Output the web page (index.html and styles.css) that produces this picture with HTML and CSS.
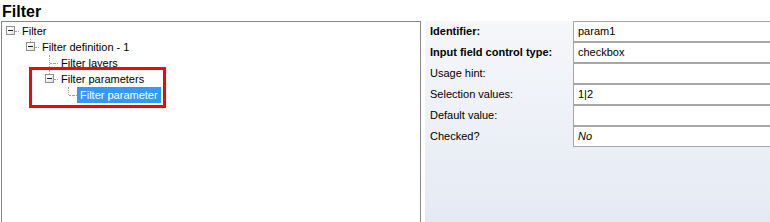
FILE: index.html
```html
<!DOCTYPE html>
<html lang="en">
<head>
    <meta charset="UTF-8">
    <meta name="viewport" content="width=device-width, initial-scale=1.0">
    <title>Filter</title>
    <link rel="stylesheet" href="styles.css">
</head>
<body>
    <h1 class="title">Filter</h1>

    <div class="editor">
        <div class="tree-panel">
            <ul class="tree">
                <li class="node lvl-0">
                    <span class="glyph open"></span><span class="stub"></span><span class="label">Filter</span>
                </li>
                <li class="node lvl-1">
                    <span class="glyph open up"></span><span class="stub"></span><span class="label">Filter definition - 1</span>
                </li>
                <li class="node lvl-2">
                    <span class="glyph leaf through"></span><span class="stub"></span><span class="label">Filter layers</span>
                </li>
                <li class="node lvl-2">
                    <span class="glyph open up"></span><span class="stub"></span><span class="label">Filter parameters</span>
                </li>
                <li class="node lvl-3">
                    <span class="glyph leaf last"></span><span class="stub"></span><span class="label selected">Filter parameter</span>
                </li>
            </ul>
            <div class="callout"></div>
        </div>

        <div class="props">
            <div class="prop">
                <span class="prop-name strong">Identifier:</span>
                <span class="prop-value">param1</span>
            </div>
            <div class="prop">
                <span class="prop-name strong">Input field control type:</span>
                <span class="prop-value">checkbox</span>
            </div>
            <div class="prop">
                <span class="prop-name">Usage hint:</span>
                <span class="prop-value"></span>
            </div>
            <div class="prop">
                <span class="prop-name">Selection values:</span>
                <span class="prop-value">1|2</span>
            </div>
            <div class="prop">
                <span class="prop-name">Default value:</span>
                <span class="prop-value"></span>
            </div>
            <div class="prop">
                <span class="prop-name">Checked?</span>
                <span class="prop-value italic">No</span>
            </div>
        </div>
    </div>
</body>
</html>
```

FILE: styles.css
```css
* {
    margin: 0;
    padding: 0;
    box-sizing: border-box;
}

html, body {
    height: 100%;
}

body {
    background: #ffffff;
    font-family: 'Liberation Sans', Arial, sans-serif;
    font-size: 11px;
    color: #000000;
    overflow: hidden;
    display: flex;
    flex-direction: column;
}

.title {
    height: 21px;
    flex-shrink: 0;
    padding: 1px 0 0 2px;
    font-size: 16px;
    line-height: 21px;
    font-weight: bold;
}

.editor {
    flex: 1;
    display: flex;
    gap: 4px;
    padding-left: 1px;
    min-height: 0;
}

/* Arbol de la izquierda */
.tree-panel {
    position: relative;
    width: 420px;
    border: 1px solid #838790;
    border-bottom: none;
    background: #ffffff;
    padding-top: 1px;
}

.tree {
    list-style: none;
}

.node {
    display: flex;
    align-items: flex-start;
    height: 16px;
}

.lvl-0 { padding-left: 4px; }
.lvl-1 { padding-left: 24px; }
.lvl-2 { padding-left: 43px; }
.lvl-3 { padding-left: 62px; }

.glyph {
    position: relative;
    width: 9px;
    height: 9px;
    margin-top: 3px;
    flex-shrink: 0;
}

.glyph.open {
    border: 1px solid #8f8f8f;
    background: linear-gradient(135deg, #ffffff 30%, #dedede);
}

.glyph.open::after {
    content: '';
    position: absolute;
    left: 1px;
    top: 3px;
    width: 5px;
    height: 1px;
    background: #202020;
}

.glyph.up::before {
    content: '';
    position: absolute;
    left: 3px;
    top: -4px;
    height: 3px;
    border-left: 1px dotted #a0a0a0;
}

.glyph.leaf::before {
    content: '';
    position: absolute;
    left: 4px;
    top: -3px;
    border-left: 1px dotted #a0a0a0;
}

.glyph.through::before {
    height: 16px;
}

.glyph.last::before {
    height: 8px;
}

.glyph.leaf::after {
    content: '';
    position: absolute;
    left: 5px;
    top: 5px;
    width: 4px;
    border-top: 1px dotted #a0a0a0;
}

.stub {
    width: 4px;
    margin-top: 8px;
    border-top: 1px dotted #a0a0a0;
    flex-shrink: 0;
}

.label {
    height: 16px;
    line-height: 16px;
    padding: 0 3px;
    white-space: nowrap;
}

.label.selected {
    background: #3399ff;
    color: #ffffff;
}

.callout {
    position: absolute;
    left: 27px;
    top: 45px;
    width: 137px;
    height: 41px;
    border: 3px solid #ff0000;
}

/* Propiedades de la derecha */
.props {
    flex: 1;
    background: linear-gradient(#f6f7fa, #e4eaf4);
}

.prop {
    display: grid;
    grid-template-columns: 148px 1fr;
    height: 21px;
}

.prop-name {
    padding-left: 5px;
    line-height: 21px;
    white-space: nowrap;
}

.prop-name.strong {
    font-weight: bold;
}

.prop-value {
    background: #ffffff;
    border: 1px solid #a6a6a6;
    border-right: none;
    padding-left: 4px;
    line-height: 19px;
}

.prop-value.italic {
    font-style: italic;
}
```
